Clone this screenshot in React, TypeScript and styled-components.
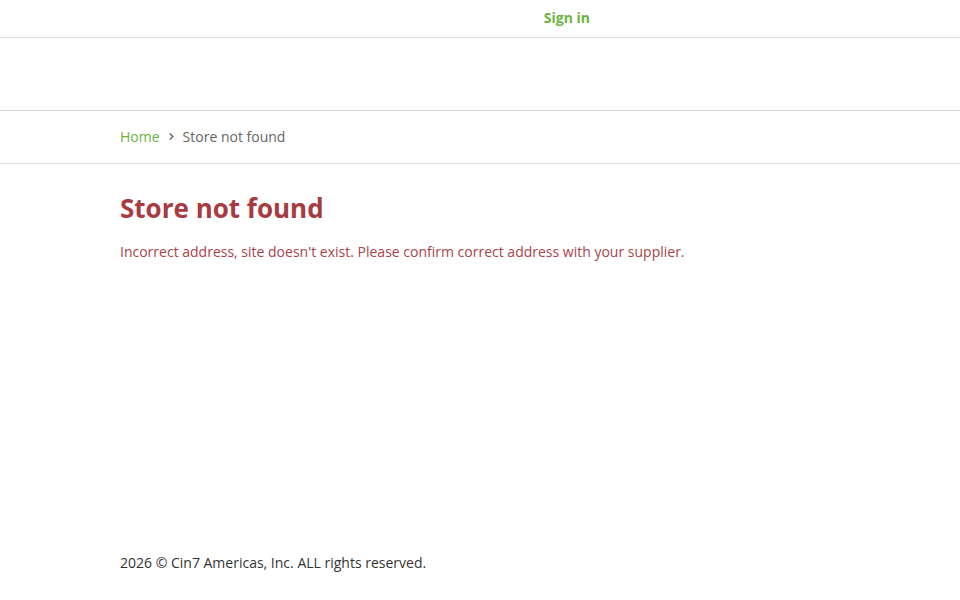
import styled, { createGlobalStyle } from 'styled-components';

const GlobalStyle = createGlobalStyle`
  html, body {
    margin: 0;
    padding: 0;
    background: #fff;
    font-family: 'Open Sans', 'Liberation Sans', sans-serif;
  }
  #root {
    min-height: 100vh;
    display: flex;
    flex-direction: column;
  }
`;

const Container = styled.div`
  width: 720px;
  margin: 0 auto;
  box-sizing: border-box;
`;

const TopBar = styled.header`
  height: 37px;
  border-bottom: 1px solid #dcdcdc;
`;

const TopBarInner = styled(Container)`
  height: 100%;
  display: flex;
  align-items: center;
  justify-content: flex-end;
  padding-bottom: 2px;
`;

const SignIn = styled.a`
  margin-right: 250px;
  font-size: 14px;
  font-weight: 700;
  color: #6cb342;
  text-decoration: none;
  cursor: pointer;
`;

const Banner = styled.div`
  height: 72px;
  border-bottom: 1px solid #d6d6d6;
`;

const Crumbs = styled.nav`
  height: 52px;
  border-bottom: 1px solid #e2e2e2;
`;

const CrumbsInner = styled(Container)`
  height: 100%;
  display: flex;
  align-items: center;
  gap: 7px;
  font-size: 14px;
  padding-bottom: 2px;
`;

const CrumbLink = styled.a`
  color: #6cb342;
  text-decoration: none;
`;

const CrumbCurrent = styled.span`
  color: #666;
`;

const Chevron = styled.svg`
  width: 9px;
  height: 9px;
`;

const Main = styled.main`
  flex: 1;
`;

const Title = styled.h1`
  margin: 26px 0 0;
  font-size: 26px;
  line-height: 36px;
  font-weight: 700;
  color: #a83a40;
`;

const Message = styled.p`
  margin: 16px 0 0;
  font-size: 14px;
  line-height: 20px;
  color: #a8434a;
`;

const Footer = styled.footer`
  padding: 0 0 27px;
`;

const FooterText = styled(Container)`
  font-size: 14px;
  line-height: 20px;
  color: #333;
`;

export default function App() {
  return (
    <>
      <GlobalStyle />
      <TopBar>
        <TopBarInner>
          <SignIn>Sign in</SignIn>
        </TopBarInner>
      </TopBar>
      <Banner />
      <Crumbs>
        <CrumbsInner>
          <CrumbLink>Home</CrumbLink>
          <Chevron viewBox="0 0 10 10" fill="none">
            <path d="M3 1.5 L6.5 5 L3 8.5" stroke="#555" strokeWidth="1.4" />
          </Chevron>
          <CrumbCurrent>Store not found</CrumbCurrent>
        </CrumbsInner>
      </Crumbs>
      <Main>
        <Container>
          <Title>Store not found</Title>
          <Message>
            Incorrect address, site doesn't exist. Please confirm correct address with your supplier.
          </Message>
        </Container>
      </Main>
      <Footer>
        <FooterText>2026 © Cin7 Americas, Inc. ALL rights reserved.</FooterText>
      </Footer>
    </>
  );
}
